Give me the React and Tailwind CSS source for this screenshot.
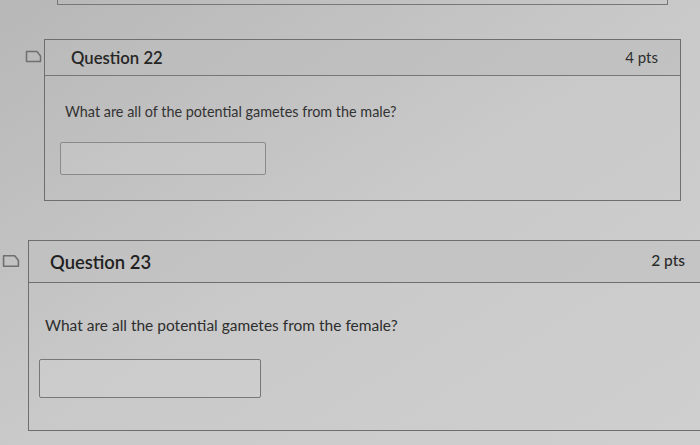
import React from "react";

function Flag({ className }) {
  return (
    <svg viewBox="0 0 17 13" className={className} fill="none">
      <path d="M1.5 1.5 H12 L15.5 6 V11.5 H1.5 Z" stroke="#6f6f6f" strokeWidth="1.5" strokeLinejoin="round" />
    </svg>
  );
}

export default function App() {
  return (
    <div
      className="w-[700px] h-[445px] overflow-hidden relative bg-gradient-to-br from-[#b7b7b7] via-[#c9c9c9] to-[#cfcfcf]"
      style={{ fontFamily: "Lato, 'Open Sans', sans-serif" }}
    >
      {/* previous card bottom */}
      <div className="ml-[57px] mr-[32px] h-[5px] border-l border-r border-b border-[#777]" />

      {/* Question 22 */}
      <div className="mt-[34px] flex">
        <div className="w-[44px] shrink-0 pt-[11px] pl-[25px]">
          <Flag className="w-[17px] h-[13px]" />
        </div>
        <div className="w-[637px] border border-[#6e6e6e]">
          <div className="h-[36px] flex items-center justify-between pl-[26px] pr-[22px] border-b border-[#777] bg-[#bdbdbd]/60">
            <span className="text-[16.7px] font-semibold text-[#262626] mt-[2px]">Question 22</span>
            <span className="text-[15px] text-[#2e2e2e]">4 pts</span>
          </div>
          <div className="h-[124px] pl-[20px] pt-[26px]">
            <p className="text-[14.4px] text-[#333] leading-[19px]">What are all of the potential gametes from the male?</p>
            <div className="mt-[21px] ml-[-5px] w-[206px] h-[33px] border border-[#8a8a8a] rounded-[2px] bg-[#cdcdcd]/40" />
          </div>
        </div>
      </div>

      {/* Question 23 */}
      <div className="mt-[39px] flex">
        <div className="w-[28px] shrink-0 pt-[14px] pl-[2px]">
          <Flag className="w-[18px] h-[14px]" />
        </div>
        <div className="flex-1 border-t border-b border-l border-[#6e6e6e]">
          <div className="h-[42px] flex items-center justify-between pl-[21px] pr-[15px] border-b border-[#6e6e6e] bg-[#c0c0c0]/60">
            <span className="text-[18.4px] font-semibold text-[#1f1f1f] mt-[3px]">Question 23</span>
            <span className="text-[15.5px] font-medium text-[#2a2a2a] -mt-[1px]">2 pts</span>
          </div>
          <div className="h-[147px] pl-[16px] pt-[32px]">
            <p className="text-[15.5px] text-[#2e2e2e] leading-[20px]">What are all the potential gametes from the female?</p>
            <div className="mt-[24px] ml-[-6px] w-[222px] h-[39px] border border-[#777] rounded-[2px] bg-[#d2d2d2]/40" />
          </div>
        </div>
      </div>
    </div>
  );
}
